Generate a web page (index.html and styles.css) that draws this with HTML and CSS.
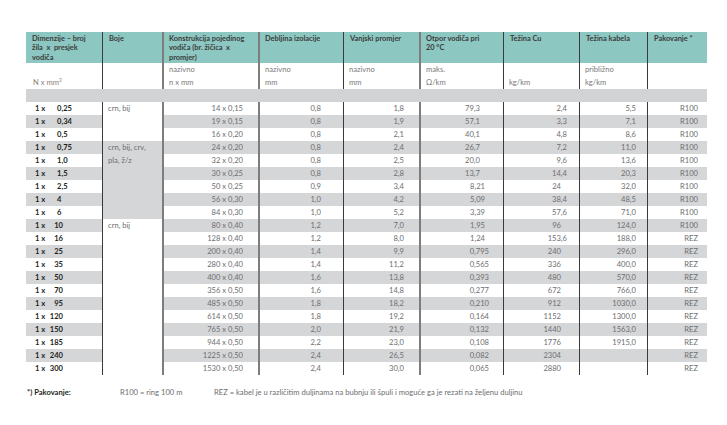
FILE: index.html
```html
<!DOCTYPE html>
<html lang="hr">
<head>
<meta charset="utf-8">
<title>Tablica kabela</title>
<link rel="stylesheet" href="styles.css">
</head>
<body>
<div class="page">
<table class="spec">
<colgroup>
<col class="c1"><col class="c2"><col class="c3"><col class="c4"><col class="c5"><col class="c6"><col class="c7"><col class="c8"><col class="c9">
</colgroup>
<thead>
<tr class="hd">
<th>Dimenzije – broj<br>žila&nbsp; x&nbsp; presjek<br>vodiča</th>
<th>Boje</th>
<th class="lt">Konstrukcija pojedinog<br>vodiča (br. žičica&nbsp; x<br>promjer)</th>
<th class="lt">Debljina izolacije</th>
<th>Vanjski promjer</th>
<th class="lt">Otpor vodiča pri<br>20 °C</th>
<th>Težina Cu</th>
<th>Težina kabela</th>
<th>Pakovanje *</th>
</tr>
<tr class="units">
<td class="u1">N x mm<sup>2</sup></td>
<td></td>
<td class="lt">nazivno<br>n x mm</td>
<td class="lt">nazivno<br>mm</td>
<td>nazivno<br>mm</td>
<td class="lt">maks.<br>Ω/km</td>
<td>kg/km</td>
<td>približno<br>kg/km</td>
<td></td>
</tr>
<tr class="band"><td colspan="9"></td></tr>
</thead>
<tbody>
<tr><td class="dim"><span class="x">1 x</span><span class="n s">0,25</span></td><td class="boje" rowspan="3">crn, bij</td><td class="k lt">14 x 0,15</td><td class="iz lt">0,8</td><td class="vp">1,8</td><td class="o1 lt">79,3</td><td class="cu">2,4</td><td class="kb">5,5</td><td class="pk">R100</td></tr>
<tr class="g"><td class="dim"><span class="x">1 x</span><span class="n s">0,34</span></td><td class="k lt">19 x 0,15</td><td class="iz lt">0,8</td><td class="vp">1,9</td><td class="o1 lt">57,1</td><td class="cu">3,3</td><td class="kb">7,1</td><td class="pk">R100</td></tr>
<tr><td class="dim"><span class="x">1 x</span><span class="n s">0,5</span></td><td class="k lt">16 x 0,20</td><td class="iz lt">0,8</td><td class="vp">2,1</td><td class="o1 lt">40,1</td><td class="cu">4,8</td><td class="kb">8,6</td><td class="pk">R100</td></tr>
<tr class="g"><td class="dim"><span class="x">1 x</span><span class="n s">0,75</span></td><td class="boje bg" rowspan="6">crn, bij, crv,<br>pla, ž/z</td><td class="k lt">24 x 0,20</td><td class="iz lt">0,8</td><td class="vp">2,4</td><td class="o1 lt">26,7</td><td class="cu">7,2</td><td class="kb">11,0</td><td class="pk">R100</td></tr>
<tr><td class="dim"><span class="x">1 x</span><span class="n s">1,0</span></td><td class="k lt">32 x 0,20</td><td class="iz lt">0,8</td><td class="vp">2,5</td><td class="o1 lt">20,0</td><td class="cu">9,6</td><td class="kb">13,6</td><td class="pk">R100</td></tr>
<tr class="g"><td class="dim"><span class="x">1 x</span><span class="n s">1,5</span></td><td class="k lt">30 x 0,25</td><td class="iz lt">0,8</td><td class="vp">2,8</td><td class="o1 lt">13,7</td><td class="cu">14,4</td><td class="kb">20,3</td><td class="pk">R100</td></tr>
<tr><td class="dim"><span class="x">1 x</span><span class="n s">2,5</span></td><td class="k lt">50 x 0,25</td><td class="iz lt">0,9</td><td class="vp">3,4</td><td class="o2 lt">8,21</td><td class="cu ci">24</td><td class="kb">32,0</td><td class="pk">R100</td></tr>
<tr class="g"><td class="dim"><span class="x">1 x</span><span class="n s">4</span></td><td class="k lt">56 x 0,30</td><td class="iz lt">1,0</td><td class="vp">4,2</td><td class="o2 lt">5,09</td><td class="cu">38,4</td><td class="kb">48,5</td><td class="pk">R100</td></tr>
<tr><td class="dim"><span class="x">1 x</span><span class="n s">6</span></td><td class="k lt">84 x 0,30</td><td class="iz lt">1,0</td><td class="vp">5,2</td><td class="o2 lt">3,39</td><td class="cu">57,6</td><td class="kb">71,0</td><td class="pk">R100</td></tr>
<tr class="g"><td class="dim"><span class="x">1 x</span><span class="n">10</span></td><td class="boje" rowspan="12">crn, bij</td><td class="k lt">80 x 0,40</td><td class="iz lt">1,2</td><td class="vp">7,0</td><td class="o2 lt">1,95</td><td class="cu ci">96</td><td class="kb">124,0</td><td class="pk">R100</td></tr>
<tr><td class="dim"><span class="x">1 x</span><span class="n">16</span></td><td class="k lt">128 x 0,40</td><td class="iz lt">1,2</td><td class="vp">8,0</td><td class="o2 lt">1,24</td><td class="cu">153,6</td><td class="kb">188,0</td><td class="pk">REZ</td></tr>
<tr class="g"><td class="dim"><span class="x">1 x</span><span class="n">25</span></td><td class="k lt">200 x 0,40</td><td class="iz lt">1,4</td><td class="vp">9,9</td><td class="o3 lt">0,795</td><td class="cu ci">240</td><td class="kb">296,0</td><td class="pk">REZ</td></tr>
<tr><td class="dim"><span class="x">1 x</span><span class="n">35</span></td><td class="k lt">280 x 0,40</td><td class="iz lt">1,4</td><td class="vp">11,2</td><td class="o3 lt">0,565</td><td class="cu ci">336</td><td class="kb">400,0</td><td class="pk">REZ</td></tr>
<tr class="g"><td class="dim"><span class="x">1 x</span><span class="n">50</span></td><td class="k lt">400 x 0,40</td><td class="iz lt">1,6</td><td class="vp">13,8</td><td class="o3 lt">0,393</td><td class="cu ci">480</td><td class="kb">570,0</td><td class="pk">REZ</td></tr>
<tr><td class="dim"><span class="x">1 x</span><span class="n">70</span></td><td class="k lt">356 x 0,50</td><td class="iz lt">1,6</td><td class="vp">14,8</td><td class="o3 lt">0,277</td><td class="cu ci">672</td><td class="kb">766,0</td><td class="pk">REZ</td></tr>
<tr class="g"><td class="dim"><span class="x">1 x</span><span class="n">95</span></td><td class="k lt">485 x 0,50</td><td class="iz lt">1,8</td><td class="vp">18,2</td><td class="o3 lt">0,210</td><td class="cu ci">912</td><td class="kb">1030,0</td><td class="pk">REZ</td></tr>
<tr><td class="dim"><span class="x">1 x</span><span class="n">120</span></td><td class="k lt">614 x 0,50</td><td class="iz lt">1,8</td><td class="vp">19,2</td><td class="o3 lt">0,164</td><td class="cu ci">1152</td><td class="kb">1300,0</td><td class="pk">REZ</td></tr>
<tr class="g"><td class="dim"><span class="x">1 x</span><span class="n">150</span></td><td class="k lt">765 x 0,50</td><td class="iz lt">2,0</td><td class="vp">21,9</td><td class="o3 lt">0,132</td><td class="cu ci">1440</td><td class="kb">1563,0</td><td class="pk">REZ</td></tr>
<tr><td class="dim"><span class="x">1 x</span><span class="n">185</span></td><td class="k lt">944 x 0,50</td><td class="iz lt">2,2</td><td class="vp">23,0</td><td class="o3 lt">0,108</td><td class="cu ci">1776</td><td class="kb">1915,0</td><td class="pk">REZ</td></tr>
<tr class="g"><td class="dim"><span class="x">1 x</span><span class="n">240</span></td><td class="k lt">1225 x 0,50</td><td class="iz lt">2,4</td><td class="vp">26,5</td><td class="o3 lt">0,082</td><td class="cu ci">2304</td><td class="kb"></td><td class="pk">REZ</td></tr>
<tr><td class="dim"><span class="x">1 x</span><span class="n">300</span></td><td class="k lt">1530 x 0,50</td><td class="iz lt">2,4</td><td class="vp">30,0</td><td class="o3 lt">0,065</td><td class="cu ci">2880</td><td class="kb"></td><td class="pk">REZ</td></tr>
</tbody>
</table>
<div class="foot">
<span class="f1">*) Pakovanje:</span>
<span class="f2">R100 = ring 100 m</span>
<span class="f3">REZ = kabel je u različitim duljinama na bubnju ili špuli i moguće ga je rezati na željenu duljinu</span>
</div>
</div>
</body>
</html>
```

FILE: styles.css
```css
html, body {
  margin: 0;
  padding: 0;
  background: #ffffff;
}

body {
  font-family: Lato, "Open Sans", sans-serif;
  color: #6d6e70;
  font-size: 7.6px;
}

.page {
  padding: 32px 0 0 26px;
}

.spec {
  border-collapse: separate;
  border-spacing: 0;
  table-layout: fixed;
  width: 681px;
}

.c1 { width: 76px; }
.c2 { width: 60px; }
.c3 { width: 96px; }
.c4 { width: 85px; }
.c5 { width: 76px; }
.c6 { width: 84px; }
.c7 { width: 76px; }
.c8 { width: 68px; }
.c9 { width: 60px; }

.spec th,
.spec td {
  padding: 0;
  border-left: 1px solid #3a3a3a;
  white-space: nowrap;
  overflow: visible;
}

.spec th:first-child,
.spec td:first-child {
  border-left: none;
}

.spec .lt {
  border-left: 2px solid #7d7d7d;
}

/* header */
.spec .hd th {
  background: #8dc7c1;
  color: #3b3b3b;
  font-weight: 700;
  text-align: left;
  vertical-align: top;
  height: 31px;
  box-sizing: border-box;
  padding: 2px 0 0 6px;
  line-height: 9.4px;
  font-size: 7.4px;
}

.spec .hd th.lt {
  padding-left: 5px;
}

/* units */
.spec .units td {
  height: 26px;
  line-height: 13px;
  vertical-align: bottom;
  text-align: left;
  padding-left: 5px;
  color: #7a7a7a;
}

.spec .units td.u1 {
  padding-left: 7px;
  color: #8a817a;
}

.units sup {
  font-size: 5px;
  line-height: 0;
  vertical-align: 3px;
}

.spec .band td {
  height: 13px;
  background: #d2d3d5;
  border-left: none;
}

/* body rows */
.spec tbody td {
  height: 13px;
  line-height: 13px;
  text-align: right;
  vertical-align: middle;
  background: #ffffff;
}

.spec tbody tr.g td {
  background: #d5d6d8;
}

.spec tbody tr td.boje {
  background: #ffffff;
  text-align: left;
  vertical-align: top;
  padding-left: 5px;
}

.spec tbody tr td.boje.bg {
  background: #d5d6d8;
}

.spec tbody td.dim {
  text-align: left;
  padding-left: 9px;
  color: #231f20;
  font-weight: 700;
}

.dim .x {
  display: inline-block;
  width: 12px;
}

.dim .n {
  display: inline-block;
  width: 16px;
  text-align: right;
}

.dim .n.s {
  width: auto;
  padding-left: 10px;
  text-align: left;
}

.spec tbody td.k { padding-right: 15px; }
.spec tbody td.iz { padding-right: 22px; }
.spec tbody td.vp { padding-right: 15px; }
.spec tbody td.o1 { padding-right: 23px; }
.spec tbody td.o2 { padding-right: 18px; }
.spec tbody td.o3 { padding-right: 14px; }
.spec tbody td.cu { padding-right: 12px; }
.spec tbody td.cu.ci { padding-right: 18px; }
.spec tbody td.kb { padding-right: 11px; }
.spec tbody td.pk { padding-right: 9px; }

/* footer */
.foot {
  display: flex;
  align-items: baseline;
  margin-top: 12px;
  padding-left: 1px;
  line-height: 10px;
}

.f1 {
  width: 93px;
  font-weight: 700;
  color: #231f20;
}

.f2 {
  width: 94px;
}
```
